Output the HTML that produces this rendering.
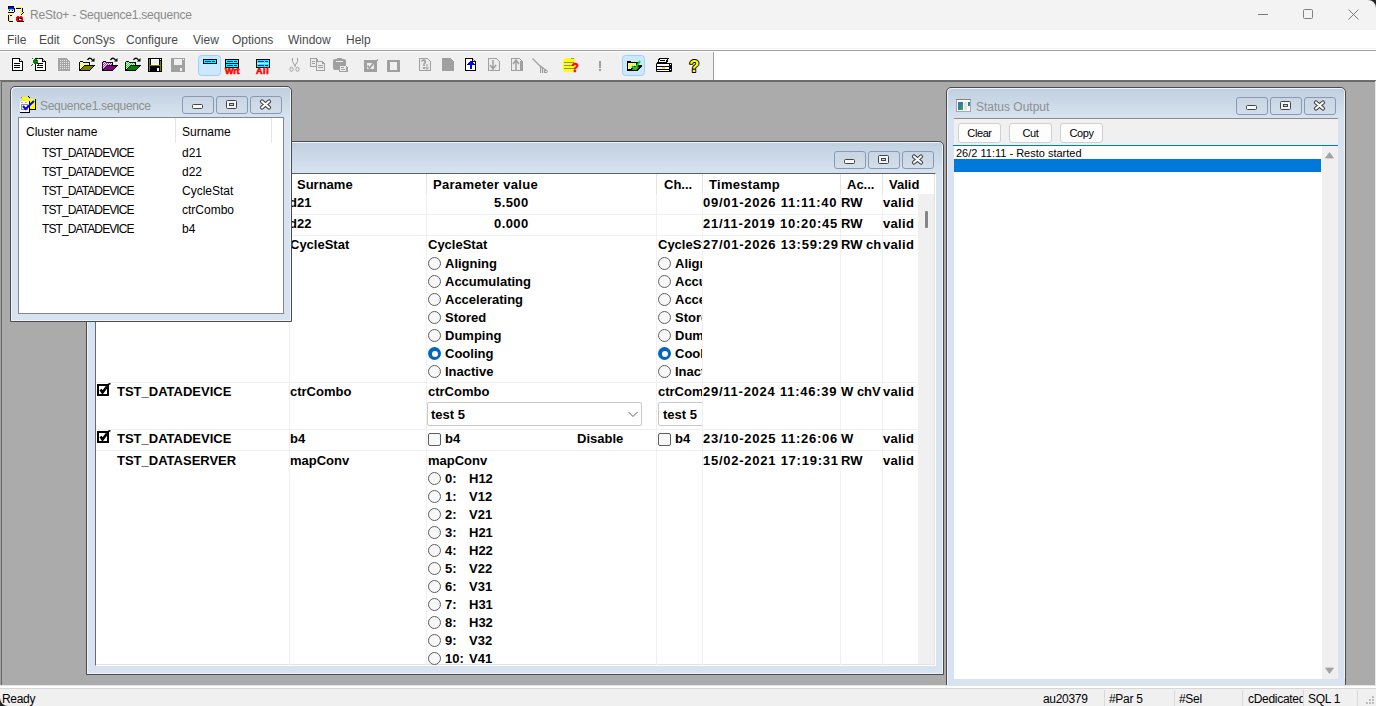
<!DOCTYPE html>
<html><head><meta charset="utf-8"><style>
*{box-sizing:border-box}
html,body{margin:0;padding:0}
body{width:1376px;height:706px;position:relative;overflow:hidden;background:#ababab;font-family:"Liberation Sans",sans-serif;color:#000}
.a{position:absolute}
.t{position:absolute;white-space:nowrap;line-height:1}
.g{font-weight:bold;font-size:13px}
.ts{letter-spacing:0.55px}
.hl{position:absolute;background:#f0f0f0;height:1px}
.vl{position:absolute;background:#f0f0f0;width:1px}
.win{position:absolute;border:1px solid #4b4b4b;border-radius:5px 5px 0 0;background:linear-gradient(#c0cfdf,#d7e3f0 31px,#d7e3f0);box-shadow:inset 1px 1px 0 #eef3f9,inset -1px -1px 0 #eef3f9}
.tb{position:absolute;width:32px;height:18px;border:1px solid #8799b5;border-radius:3px;background:linear-gradient(#c9d5e3,#d3deea)}
.tb svg{position:absolute;left:-1px;top:-1px}
.wt{position:absolute;font-size:12px;color:#8f8f8f;line-height:1;white-space:nowrap}
.sb{position:absolute;top:693px;font-size:12px;line-height:1;white-space:nowrap;letter-spacing:-0.3px}
.sep{position:absolute;top:690px;width:1px;height:16px;background:#d9d9d9}
.rad{position:absolute;width:13px;height:13px;border-radius:50%;border:1px solid #5f5f5f;background:#f7f7f7}
.rad.on{border:none;background:#0067c0}
.rad.on:after{content:"";position:absolute;left:3.5px;top:3.5px;width:6px;height:6px;border-radius:50%;background:#fff}
.chk{position:absolute;width:13px;height:13px;border:1px solid #5f5f5f;border-radius:2px;background:#f7f7f7}
.btn{position:absolute;height:20px;border:1px solid #d0d0d0;border-radius:3px;background:#fdfdfd;font-size:11px;line-height:18px;text-align:center;letter-spacing:-0.4px}
</style></head><body>
<div class="a" style="left:0;top:0;width:1376px;height:30px;background:#f3f3f3"></div>
<div class="a" style="left:0;top:30px;width:1376px;height:20px;background:#fff"></div>
<div class="t" style="left:7px;top:34px;font-size:12px;color:#4a4a4a">File</div>
<div class="t" style="left:39px;top:34px;font-size:12px;color:#4a4a4a">Edit</div>
<div class="t" style="left:73px;top:34px;font-size:12px;color:#4a4a4a">ConSys</div>
<div class="t" style="left:126px;top:34px;font-size:12px;color:#4a4a4a">Configure</div>
<div class="t" style="left:193px;top:34px;font-size:12px;color:#4a4a4a">View</div>
<div class="t" style="left:232px;top:34px;font-size:12px;color:#4a4a4a">Options</div>
<div class="t" style="left:288px;top:34px;font-size:12px;color:#4a4a4a">Window</div>
<div class="t" style="left:346px;top:34px;font-size:12px;color:#4a4a4a">Help</div>
<svg class="a" style="left:8px;top:6px" width="16" height="16" shape-rendering="crispEdges">
<rect x="0" y="0" width="6" height="1" fill="#000"/><rect x="0" y="1" width="1" height="2" fill="#000"/><rect x="1" y="1" width="5" height="2" fill="#0000ff"/>
<rect x="0" y="3" width="7" height="1" fill="#00e0ff"/><rect x="0" y="4" width="6" height="1" fill="#fff"/><rect x="1" y="4" width="1" height="1" fill="#000"/><rect x="4" y="4" width="1" height="1" fill="#000"/>
<rect x="6" y="2" width="1" height="4" fill="#000"/><rect x="0" y="6" width="6" height="1" fill="#000"/>
<rect x="8" y="1" width="6" height="1" fill="#ffff00"/><rect x="8" y="2" width="5" height="1" fill="#000"/><rect x="13" y="1" width="1" height="6" fill="#ffff00"/><rect x="14" y="2" width="1" height="5" fill="#000"/>
<rect x="12" y="6" width="3" height="1" fill="#ffff00"/><rect x="13" y="7" width="1" height="1" fill="#ffff00"/><rect x="15" y="6" width="1" height="1" fill="#000"/><rect x="13" y="8" width="1" height="1" fill="#000"/><rect x="14" y="7" width="1" height="1" fill="#000"/>
<rect x="1" y="7" width="1" height="8" fill="#ffff00"/><rect x="0" y="8" width="3" height="1" fill="#ffff00"/><rect x="0" y="9" width="1" height="6" fill="#000"/><rect x="2" y="9" width="2" height="1" fill="#000"/>
<rect x="1" y="14" width="3" height="1" fill="#ffff00"/><rect x="1" y="15" width="4" height="1" fill="#000"/>
<rect x="8" y="11" width="7" height="4" fill="#ff0000"/><rect x="9" y="10" width="2" height="1" fill="#ff0000"/><rect x="12" y="10" width="2" height="1" fill="#ff0000"/>
<rect x="10" y="12" width="1" height="2" fill="#000"/><rect x="12" y="12" width="2" height="1" fill="#000"/><rect x="9" y="15" width="7" height="1" fill="#000"/><rect x="11" y="13" width="2" height="1" fill="#fff"/>
</svg>
<div class="t" style="left:30px;top:9px;font-size:12px;color:#8a8a8a;letter-spacing:-0.2px">ReSto+ - Sequence1.sequence</div>
<svg class="a" style="left:1250px;top:5px" width="120" height="20">
 <line x1="8" y1="9.5" x2="18" y2="9.5" stroke="#7a7a7a"/>
 <rect x="53.5" y="4.5" width="9" height="9" rx="1" fill="none" stroke="#808080"/>
 <line x1="98.5" y1="4.5" x2="108.5" y2="14.5" stroke="#7a7a7a"/>
 <line x1="108.5" y1="4.5" x2="98.5" y2="14.5" stroke="#7a7a7a"/>
</svg>
<svg class="a" style="left:1366px;top:0" width="10" height="10"><path d="M2 0H10V8A8 8 0 0 0 2 0Z" fill="#262626"/></svg>
<div class="a" style="left:0;top:50px;width:1376px;height:31px;background:#fff;border-top:1px solid #a0a0a0;border-bottom:1px solid #6e6e6e"></div>
<div class="a" style="left:0;top:52px;width:714px;height:28px;background:#f0f0f0;border-right:1px solid #a0a0a0"></div>
<div class="a" style="left:0;top:48px;width:1376px;height:1px;background:#f3f3f3"></div>
<svg class="a" style="left:0;top:0" width="720" height="81" shape-rendering="crispEdges">
<defs>
<pattern id="chkY" width="2" height="2" patternUnits="userSpaceOnUse"><rect width="2" height="2" fill="#ffff00"/><rect width="1" height="1" fill="#fff"/><rect x="1" y="1" width="1" height="1" fill="#fff"/></pattern>
<pattern id="chkM" width="2" height="2" patternUnits="userSpaceOnUse"><rect width="2" height="2" fill="#ff00ff"/><rect width="1" height="1" fill="#fff"/><rect x="1" y="1" width="1" height="1" fill="#fff"/></pattern>
<pattern id="chkG" width="2" height="2" patternUnits="userSpaceOnUse"><rect width="2" height="2" fill="#00ff00"/><rect width="1" height="1" fill="#fff"/><rect x="1" y="1" width="1" height="1" fill="#fff"/></pattern>
<pattern id="dotG" width="2" height="2" patternUnits="userSpaceOnUse"><rect width="2" height="2" fill="#a4a4a4"/><rect width="1" height="1" fill="#e8e8e8"/></pattern>
</defs>
<!-- 1 doc -->
<g><path d="M12 58H20V59H13V70H22V61H23V71H12Z" fill="#000"/><path d="M13 59H19V62H22V70H13Z" fill="#fff"/><rect x="19" y="58" width="1" height="4" fill="#000"/><rect x="19" y="61" width="4" height="1" fill="#000"/><rect x="20" y="59" width="1" height="1" fill="#000" opacity="0.5"/><rect x="21" y="60" width="1" height="1" fill="#000" opacity="0.5"/><rect x="14" y="63" width="6" height="1" fill="#000"/><rect x="14" y="65" width="6" height="1" fill="#000"/><rect x="14" y="67" width="6" height="1" fill="#000"/></g>
<!-- 2 new doc -->
<g><path d="M35 58H43V59H36V70H45V61H46V71H35Z" fill="#000"/><path d="M36 59H42V62H45V70H36Z" fill="#fff"/><rect x="42" y="58" width="1" height="4" fill="#000"/><rect x="42" y="61" width="4" height="1" fill="#000"/><rect x="43" y="59" width="1" height="1" fill="#000" opacity="0.5"/><rect x="44" y="60" width="1" height="1" fill="#000" opacity="0.5"/><rect x="37" y="63" width="6" height="1" fill="#000"/><rect x="37" y="65" width="6" height="1" fill="#000"/><rect x="37" y="67" width="6" height="1" fill="#000"/><rect x="34" y="59" width="3" height="5" fill="#008000"/><rect x="33" y="60" width="5" height="3" fill="#008000"/><rect x="32" y="58" width="1" height="1" fill="#008000"/><rect x="38" y="58" width="1" height="1" fill="#008000"/><rect x="32" y="64" width="1" height="1" fill="#008000"/><rect x="38" y="64" width="1" height="1" fill="#008000"/><rect x="31" y="65" width="1" height="1" fill="#008000"/><rect x="39" y="65" width="1" height="1" fill="#008000"/></g>
<!-- 3 gray doc -->
<path d="M58 58H66L70 62V71H58Z" fill="url(#dotG)"/><path d="M58 58H66V59H59V70H69V62H70V71H58Z" fill="#a4a4a4"/><path d="M66 58L70 62V63H69V62L66 59Z" fill="#a4a4a4"/>
<!-- folders -->
<g><path d="M80 62H89V65H84L80 70Z" fill="url(#chkY)"/><rect x="80" y="61" width="3" height="1" fill="#000"/><rect x="79" y="62" width="1" height="9" fill="#000"/><rect x="83" y="62" width="7" height="1" fill="#000"/><rect x="89" y="62" width="1" height="3" fill="#000"/><path d="M84 65H95L90 71H79V70H80Z" fill="#000"/><path d="M84.5 66H93L89 70H81Z" fill="#808000"/><path d="M87.5 60Q89 57.5 91 58.5L92.5 60" stroke="#000" stroke-width="1.3" fill="none" shape-rendering="auto"/><path d="M91 61.5H94.5V58Z" fill="#000" shape-rendering="auto"/></g>
<g><path d="M103 62H112V65H107L103 70Z" fill="url(#chkM)"/><rect x="103" y="61" width="3" height="1" fill="#000"/><rect x="102" y="62" width="1" height="9" fill="#000"/><rect x="106" y="62" width="7" height="1" fill="#000"/><rect x="112" y="62" width="1" height="3" fill="#000"/><path d="M107 65H118L113 71H102V70H103Z" fill="#000"/><path d="M107.5 66H116L112 70H104Z" fill="#800080"/><path d="M110.5 60Q112 57.5 114 58.5L115.5 60" stroke="#000" stroke-width="1.3" fill="none" shape-rendering="auto"/><path d="M114 61.5H117.5V58Z" fill="#000" shape-rendering="auto"/></g>
<g><path d="M126 62H135V65H130L126 70Z" fill="url(#chkG)"/><rect x="126" y="61" width="3" height="1" fill="#000"/><rect x="125" y="62" width="1" height="9" fill="#000"/><rect x="129" y="62" width="7" height="1" fill="#000"/><rect x="135" y="62" width="1" height="3" fill="#000"/><path d="M130 65H141L136 71H125V70H126Z" fill="#000"/><path d="M130.5 66H139L135 70H127Z" fill="#008000"/><path d="M133.5 60Q135 57.5 137 58.5L138.5 60" stroke="#000" stroke-width="1.3" fill="none" shape-rendering="auto"/><path d="M137 61.5H140.5V58Z" fill="#000" shape-rendering="auto"/></g>
<!-- floppy -->
<rect x="148" y="58" width="14" height="14" fill="#000"/>
<rect x="149" y="59" width="1" height="12" fill="#808000"/><rect x="160" y="61" width="1" height="10" fill="#808000"/><rect x="149" y="65" width="12" height="1" fill="#808000"/>
<rect x="151" y="59" width="8" height="6" fill="#fff"/><rect x="152" y="60" width="6" height="4" fill="#efefef"/>
<rect x="157" y="68" width="2" height="3" fill="#fff"/><rect x="160" y="59" width="1" height="1" fill="#fff"/>
<!-- gray floppy -->
<rect x="171" y="58" width="14" height="14" fill="#a0a0a0"/>
<rect x="174" y="59" width="8" height="6" fill="#efefef"/>
<rect x="180" y="68" width="2" height="3" fill="#efefef"/><rect x="183" y="59" width="1" height="1" fill="#fff"/>
<!-- highlighted button 1 -->
<rect x="198.5" y="55.5" width="22" height="20" rx="3" fill="#cce8ff" stroke="#99d1ff" shape-rendering="auto"/>
<rect x="203" y="59" width="14" height="5" fill="#000"/><rect x="204" y="60" width="12" height="3" fill="#00ffff"/><rect x="205" y="61" width="6" height="1" fill="#0000ff"/><rect x="212" y="61" width="3" height="1" fill="#0000ff"/>
<!-- Wrt -->
<rect x="225" y="59" width="14" height="9" fill="#000"/><rect x="226" y="60" width="12" height="3" fill="#00ffff"/><rect x="226" y="64" width="12" height="3" fill="#00ffff"/>
<rect x="227" y="61" width="6" height="1" fill="#0000ff"/><rect x="234" y="61" width="3" height="1" fill="#0000ff"/><rect x="227" y="65" width="6" height="1" fill="#0000ff"/><rect x="234" y="65" width="3" height="1" fill="#0000ff"/>
<text x="225" y="73.5" font-family="Liberation Sans" font-weight="bold" font-size="9" fill="#ff0000" stroke="#ff0000" stroke-width="0.6" letter-spacing="-0.2">Wrt</text>
<!-- All -->
<rect x="256" y="59" width="14" height="9" fill="#000"/><rect x="257" y="60" width="12" height="3" fill="#00ffff"/><rect x="257" y="64" width="12" height="3" fill="#00ffff"/><rect x="257" y="63" width="12" height="1" fill="#e0e0e0"/>
<rect x="258" y="61" width="6" height="1" fill="#0000ff"/><rect x="265" y="61" width="3" height="1" fill="#0000ff"/><rect x="258" y="65" width="6" height="1" fill="#0000ff"/><rect x="265" y="65" width="3" height="1" fill="#0000ff"/>
<text x="256" y="73.5" font-family="Liberation Sans" font-weight="bold" font-size="9" fill="#ff0000" stroke="#ff0000" stroke-width="0.6" letter-spacing="0.6">All</text>
<!-- scissors -->
<g fill="none" stroke="#a0a0a0" stroke-width="1" shape-rendering="auto">
<path d="M292.5 58V61.5L295.5 66.5M297.5 58V61.5L294.5 66.5"/>
<ellipse cx="291.5" cy="69.3" rx="1.6" ry="2.1"/><ellipse cx="297.5" cy="69.3" rx="1.6" ry="2.1"/>
</g>
<!-- copy -->
<path d="M310 58H316L318 60V67H310Z" fill="#a0a0a0"/><rect x="311" y="59" width="5" height="7" fill="#ececec"/>
<rect x="312" y="61" width="3" height="1" fill="#a0a0a0"/><rect x="312" y="63" width="3" height="1" fill="#a0a0a0"/>
<path d="M316 61H322L325 64V71H316Z" fill="#a0a0a0"/><rect x="317" y="62" width="5" height="8" fill="#ececec"/><rect x="322" y="64" width="2" height="6" fill="#ececec"/>
<rect x="318" y="65" width="5" height="1" fill="#a0a0a0"/><rect x="318" y="67" width="5" height="1" fill="#a0a0a0"/>
<!-- paste -->
<rect x="333" y="59" width="13" height="11" rx="2" fill="#a0a0a0" shape-rendering="auto"/><rect x="337" y="58" width="5" height="2" fill="#a0a0a0"/><rect x="336" y="61" width="7" height="1" fill="#ececec"/>
<path d="M339 65H345L348 68V72H339Z" fill="#a0a0a0"/><rect x="340" y="66" width="6" height="5" fill="#ececec"/>
<rect x="341" y="67" width="3" height="1" fill="#a0a0a0"/><rect x="341" y="69" width="4" height="1" fill="#a0a0a0"/>
<!-- checkbox gray -->
<rect x="364" y="60" width="13" height="12" fill="#a0a0a0"/><rect x="367" y="63" width="7" height="6" fill="#ececec"/>
<path d="M367.5 65.5L369.5 68L374.5 62" stroke="#a0a0a0" stroke-width="1.8" fill="none" shape-rendering="auto"/><rect x="377" y="59" width="1" height="2" fill="#a0a0a0"/>
<!-- square gray -->
<rect x="387" y="60" width="13" height="12" fill="#a0a0a0"/><rect x="390" y="62" width="7" height="8" fill="#f0f0f0"/>
<!-- ?doc -->
<path d="M419 58H427L431 62V71H419Z" fill="#a0a0a0"/><path d="M420 59H427L430 62V70H420Z" fill="#ececec"/>
<path d="M421.5 61.5Q423 59.5 425 60.5Q426 62 424 64V66" stroke="#a0a0a0" stroke-width="1.6" fill="none" shape-rendering="auto"/><rect x="423" y="67" width="2" height="2" fill="#a0a0a0"/>
<path d="M427 64V69M425.5 67.5L427 69.5L428.5 67.5" stroke="#a0a0a0" fill="none" shape-rendering="auto"/>
<!-- gray filled doc -->
<path d="M442 58H450L454 62V71H442Z" fill="#a0a0a0"/>
<!-- blue arrow doc -->
<path d="M465 58H473V59H466V70H475V61H476V71H465Z" fill="#000"/><path d="M466 59H472V62H475V70H466Z" fill="#fff"/><rect x="472" y="58" width="1" height="4" fill="#000"/><rect x="472" y="61" width="4" height="1" fill="#000"/><rect x="473" y="59" width="1" height="1" fill="#000" opacity="0.5"/><rect x="474" y="60" width="1" height="1" fill="#000" opacity="0.5"/><path d="M471 60L467 65H470V69H472V65H475Z" fill="#0000ff"/>
<!-- down arrow doc gray -->
<path d="M488 58H496L500 62V71H488Z" fill="#a0a0a0"/><path d="M489 59H496L499 62V70H489Z" fill="#ececec"/>
<path d="M493 60V68M490 65L493 69L496 65" stroke="#a0a0a0" stroke-width="1.5" fill="none" shape-rendering="auto"/>
<!-- up arrow doc gray -->
<path d="M511 58H519L523 62V71H511Z" fill="#a0a0a0"/><path d="M512 59H519L522 62V70H512Z" fill="#ececec"/>
<path d="M516 70V61M513 64L516 60L519 64" stroke="#a0a0a0" stroke-width="1.5" fill="none" shape-rendering="auto"/><rect x="520" y="61" width="2" height="9" fill="#a0a0a0"/>
<!-- broom -->
<path d="M532.5 58.5L541 67" stroke="#a0a0a0" stroke-width="1.2" fill="none" shape-rendering="auto"/>
<path d="M540 65L548 71L547 73H540Z" fill="#a0a0a0" shape-rendering="auto"/><rect x="541" y="68" width="1" height="5" fill="#e0e0e0"/><rect x="543" y="69" width="1" height="4" fill="#e0e0e0"/><rect x="545" y="71" width="2" height="1" fill="#e0e0e0"/>
<!-- db yellow ? -->
<path d="M565 58H574L575 60V71L573 72H565L563 71V60Z" fill="#ffff00"/>
<rect x="564" y="62" width="10" height="1" fill="#8a8aa0"/><rect x="564" y="65" width="10" height="1" fill="#8a8aa0"/><rect x="564" y="68" width="10" height="1" fill="#8a8aa0"/><rect x="571" y="58" width="3" height="1" fill="#8a8aa0"/>
<text x="571.5" y="72" font-family="Liberation Sans" font-weight="bold" font-size="12" fill="#ff0000" stroke="#ff0000" stroke-width="0.5">?</text>
<!-- ! -->
<rect x="599" y="61" width="2" height="7" fill="#a0a0a0"/><rect x="599" y="69" width="2" height="2" fill="#a0a0a0"/>
<!-- highlighted button 2 -->
<rect x="622.5" y="55.5" width="22" height="20" rx="3" fill="#cce8ff" stroke="#99d1ff" shape-rendering="auto"/>
<path d="M627 61H630L631 62H638V65H642V66L637 71H627Z" fill="#000"/>
<rect x="628" y="63" width="8" height="6" fill="url(#chkY)"/>
<path d="M629 71L633 66H641L637 71Z" fill="#000"/><path d="M631 70L634 67H639L636 70Z" fill="#808000"/>
<path d="M632 66L635 69L640 61" stroke="#00e000" stroke-width="2" fill="none" shape-rendering="auto"/>
<!-- printer -->
<path d="M659 58H669L667 63H657Z" fill="#000"/><path d="M660 59H667L666 62H659Z" fill="#fff"/><rect x="660" y="60" width="5" height="1" fill="#000"/>
<rect x="656" y="63" width="16" height="9" rx="1" fill="#000" shape-rendering="auto"/>
<rect x="657" y="64" width="12" height="2" fill="#fff"/><rect x="657" y="67" width="12" height="2" fill="#fff"/><rect x="662" y="67" width="3" height="2" fill="#e8e800"/>
<rect x="657" y="70" width="12" height="1" fill="#fff"/><rect x="670" y="64" width="1" height="1" fill="#fff"/><rect x="670" y="69" width="1" height="1" fill="#fff"/>
<!-- ? yellow -->
<text x="689.3" y="72.3" font-family="Liberation Sans" font-weight="bold" font-size="16.5" fill="#ffff00" stroke="#000" stroke-width="2" paint-order="stroke" stroke-linejoin="round">?</text>
</svg>

<div class="a" style="left:0;top:81px;width:1376px;height:605px;background:#ababab;border-left:1px solid #a0a0a0;border-right:1px solid #e8e8e8;box-shadow:inset 1px 1px 0 #696969"></div>
<div class="win" style="left:86px;top:141px;width:858px;height:534px"></div>
<div class="tb" style="left:834px;top:151px"><svg width="32" height="18"><rect x="10.5" y="8.5" width="10" height="4" rx="1" fill="#fafafa" stroke="#444"/></svg></div><div class="tb" style="left:868px;top:151px"><svg width="32" height="18"><rect x="10.5" y="4.5" width="10" height="8" rx="1" fill="#f4f4f4" stroke="#444"/><rect x="13.5" y="7.5" width="4" height="2" fill="#c9d5e3" stroke="#444"/></svg></div><div class="tb" style="left:902px;top:151px"><svg width="32" height="18"><path d="M12 5.5L19 11.5M19 5.5L12 11.5" stroke="#3a3a3a" stroke-width="4.2" stroke-linecap="round"/><path d="M12 5.5L19 11.5M19 5.5L12 11.5" stroke="#fafafa" stroke-width="2.2" stroke-linecap="round"/></svg></div>
<div class="a" style="left:95px;top:173px;width:841px;height:493px;background:#fff;border-left:1px solid #6a6a6a;border-top:1px solid #606060;border-right:1px solid #fff;border-bottom:1px solid #fff;box-shadow:inset -1px -1px 0 #e3e3e3"></div>
<div class="a" style="left:918px;top:194px;width:16px;height:470px;background:#f0f0f0"></div>
<div class="a" style="left:925px;top:211px;width:2.5px;height:17px;background:#858585;border-radius:1px"></div>
<div class="vl" style="left:289px;top:174px;height:491px"></div>
<div class="vl" style="left:289px;top:174px;height:20px;background:#e3e3e3"></div>
<div class="vl" style="left:426px;top:174px;height:491px"></div>
<div class="vl" style="left:426px;top:174px;height:20px;background:#e3e3e3"></div>
<div class="vl" style="left:656px;top:174px;height:491px"></div>
<div class="vl" style="left:656px;top:174px;height:20px;background:#e3e3e3"></div>
<div class="vl" style="left:702px;top:174px;height:491px"></div>
<div class="vl" style="left:702px;top:174px;height:20px;background:#e3e3e3"></div>
<div class="vl" style="left:840px;top:174px;height:491px"></div>
<div class="vl" style="left:840px;top:174px;height:20px;background:#e3e3e3"></div>
<div class="vl" style="left:882px;top:174px;height:491px"></div>
<div class="vl" style="left:882px;top:174px;height:20px;background:#e3e3e3"></div>
<div class="hl" style="left:96px;top:214px;width:822px"></div>
<div class="hl" style="left:96px;top:235px;width:822px"></div>
<div class="hl" style="left:96px;top:382px;width:822px"></div>
<div class="hl" style="left:96px;top:429px;width:822px"></div>
<div class="hl" style="left:96px;top:450px;width:822px"></div>
<div class="t g" style="left:297px;top:178px;">Surname</div>
<div class="t g" style="left:433px;top:178px;letter-spacing:0.3px">Parameter value</div>
<div class="t g" style="left:664px;top:178px;">Ch...</div>
<div class="t g" style="left:709px;top:178px;letter-spacing:0.3px">Timestamp</div>
<div class="t g" style="left:847px;top:178px;">Ac...</div>
<div class="t g" style="left:889px;top:178px;">Valid</div>
<div class="t g" style="left:289px;top:196px;">d21</div>
<div class="t g" style="left:494px;top:196px;letter-spacing:0.4px">5.500</div>
<div class="t g" style="left:703px;top:196px;letter-spacing:0.75px">09/01-2026 11:11:40</div>
<div class="t g" style="left:841px;top:196px;">RW</div>
<div class="t g" style="left:883px;top:196px;letter-spacing:0.3px">valid</div>
<div class="t g" style="left:289px;top:217px;">d22</div>
<div class="t g" style="left:494px;top:217px;letter-spacing:0.4px">0.000</div>
<div class="t g" style="left:703px;top:217px;letter-spacing:0.75px">21/11-2019 10:20:45</div>
<div class="t g" style="left:841px;top:217px;">RW</div>
<div class="t g" style="left:883px;top:217px;letter-spacing:0.3px">valid</div>
<div class="t g" style="left:290px;top:238px;">CycleStat</div>
<div class="t g" style="left:428px;top:238px;">CycleStat</div>
<div class="rad" style="left:428px;top:257px"></div>
<div class="t g" style="left:445px;top:257px;">Aligning</div>
<div class="rad" style="left:428px;top:275px"></div>
<div class="t g" style="left:445px;top:275px;">Accumulating</div>
<div class="rad" style="left:428px;top:293px"></div>
<div class="t g" style="left:445px;top:293px;">Accelerating</div>
<div class="rad" style="left:428px;top:311px"></div>
<div class="t g" style="left:445px;top:311px;">Stored</div>
<div class="rad" style="left:428px;top:329px"></div>
<div class="t g" style="left:445px;top:329px;">Dumping</div>
<div class="rad on" style="left:428px;top:347px"></div>
<div class="t g" style="left:445px;top:347px;">Cooling</div>
<div class="rad" style="left:428px;top:365px"></div>
<div class="t g" style="left:445px;top:365px;">Inactive</div>
<div class="a" style="left:657px;top:236px;width:45px;height:146px;overflow:hidden"><div class="t g" style="left:1px;top:2px">CycleStat</div><div class="rad" style="left:1px;top:21px"></div><div class="t g" style="left:18px;top:21px">Aligning</div><div class="rad" style="left:1px;top:39px"></div><div class="t g" style="left:18px;top:39px">Accumulating</div><div class="rad" style="left:1px;top:57px"></div><div class="t g" style="left:18px;top:57px">Accelerating</div><div class="rad" style="left:1px;top:75px"></div><div class="t g" style="left:18px;top:75px">Stored</div><div class="rad" style="left:1px;top:93px"></div><div class="t g" style="left:18px;top:93px">Dumping</div><div class="rad on" style="left:1px;top:111px"></div><div class="t g" style="left:18px;top:111px">Cooling</div><div class="rad" style="left:1px;top:129px"></div><div class="t g" style="left:18px;top:129px">Inactive</div></div>
<div class="t g" style="left:703px;top:238px;letter-spacing:0.75px">27/01-2026 13:59:29</div>
<div class="a" style="left:841px;top:236px;width:41px;height:20px;overflow:hidden"><div class="t g" style="left:0;top:2px">RW ch</div></div>
<div class="t g" style="left:883px;top:238px;letter-spacing:0.3px">valid</div>
<svg class="a" style="left:97px;top:383px" width="15" height="13"><rect x="0" y="1" width="12" height="12" fill="#000"/><rect x="2" y="3" width="8" height="8" fill="#fff"/><path d="M3.5 6.5L5.5 9.5L10 3.5" stroke="#000" stroke-width="2.6" fill="none"/><path d="M11 1.5L13.5 0.5" stroke="#000" stroke-width="1.5"/></svg>
<div class="t g" style="left:117px;top:385px;">TST_DATADEVICE</div>
<div class="t g" style="left:290px;top:385px;">ctrCombo</div>
<div class="t g" style="left:428px;top:385px;">ctrCombo</div>
<div class="a" style="left:427px;top:402px;width:215px;height:24px;border:1px solid #c8c8c8;border-radius:2px;background:#fff"></div>
<div class="t g" style="left:431px;top:408px;">test 5</div>
<svg class="a" style="left:627px;top:410px" width="12" height="8"><path d="M1.5 2L6 6.5L10.5 2" stroke="#606060" fill="none" stroke-width="1"/></svg>
<div class="a" style="left:657px;top:383px;width:45px;height:46px;overflow:hidden"><div class="t g" style="left:1px;top:2px">ctrCombo</div><div class="a" style="left:1px;top:19px;width:80px;height:24px;border:1px solid #c8c8c8;border-radius:2px;background:#fff"></div><div class="t g" style="left:6px;top:25px">test 5</div></div>
<div class="t g" style="left:703px;top:385px;letter-spacing:0.75px">29/11-2024 11:46:39</div>
<div class="a" style="left:841px;top:383px;width:41px;height:20px;overflow:hidden"><div class="t g" style="left:0;top:2px">W chV</div></div>
<div class="t g" style="left:883px;top:385px;letter-spacing:0.3px">valid</div>
<svg class="a" style="left:97px;top:430px" width="15" height="13"><rect x="0" y="1" width="12" height="12" fill="#000"/><rect x="2" y="3" width="8" height="8" fill="#fff"/><path d="M3.5 6.5L5.5 9.5L10 3.5" stroke="#000" stroke-width="2.6" fill="none"/><path d="M11 1.5L13.5 0.5" stroke="#000" stroke-width="1.5"/></svg>
<div class="t g" style="left:117px;top:432px;">TST_DATADEVICE</div>
<div class="t g" style="left:290px;top:432px;">b4</div>
<div class="chk" style="left:428px;top:433px"></div>
<div class="t g" style="left:445px;top:432px;">b4</div>
<div class="t g" style="left:577px;top:432px;">Disable</div>
<div class="chk" style="left:658px;top:433px"></div>
<div class="t g" style="left:675px;top:432px;">b4</div>
<div class="t g" style="left:703px;top:432px;letter-spacing:0.75px">23/10-2025 11:26:06</div>
<div class="t g" style="left:841px;top:432px;">W</div>
<div class="t g" style="left:883px;top:432px;letter-spacing:0.3px">valid</div>
<div class="t g" style="left:117px;top:454px;">TST_DATASERVER</div>
<div class="t g" style="left:290px;top:454px;">mapConv</div>
<div class="t g" style="left:428px;top:454px;">mapConv</div>
<div class="a" style="left:96px;top:174px;width:822px;height:491px;overflow:hidden"><div class="rad" style="left:332px;top:298px"></div><div class="t g" style="left:349px;top:298px">0:</div><div class="t g" style="left:373px;top:298px">H12</div><div class="rad" style="left:332px;top:316px"></div><div class="t g" style="left:349px;top:316px">1:</div><div class="t g" style="left:373px;top:316px">V12</div><div class="rad" style="left:332px;top:334px"></div><div class="t g" style="left:349px;top:334px">2:</div><div class="t g" style="left:373px;top:334px">V21</div><div class="rad" style="left:332px;top:352px"></div><div class="t g" style="left:349px;top:352px">3:</div><div class="t g" style="left:373px;top:352px">H21</div><div class="rad" style="left:332px;top:370px"></div><div class="t g" style="left:349px;top:370px">4:</div><div class="t g" style="left:373px;top:370px">H22</div><div class="rad" style="left:332px;top:388px"></div><div class="t g" style="left:349px;top:388px">5:</div><div class="t g" style="left:373px;top:388px">V22</div><div class="rad" style="left:332px;top:406px"></div><div class="t g" style="left:349px;top:406px">6:</div><div class="t g" style="left:373px;top:406px">V31</div><div class="rad" style="left:332px;top:424px"></div><div class="t g" style="left:349px;top:424px">7:</div><div class="t g" style="left:373px;top:424px">H31</div><div class="rad" style="left:332px;top:442px"></div><div class="t g" style="left:349px;top:442px">8:</div><div class="t g" style="left:373px;top:442px">H32</div><div class="rad" style="left:332px;top:460px"></div><div class="t g" style="left:349px;top:460px">9:</div><div class="t g" style="left:373px;top:460px">V32</div><div class="rad" style="left:332px;top:478px"></div><div class="t g" style="left:349px;top:478px">10:</div><div class="t g" style="left:373px;top:478px">V41</div></div>
<div class="t g" style="left:703px;top:454px;letter-spacing:0.75px">15/02-2021 17:19:31</div>
<div class="t g" style="left:841px;top:454px;">RW</div>
<div class="t g" style="left:883px;top:454px;letter-spacing:0.3px">valid</div>
<div class="win" style="left:10px;top:86px;width:282px;height:236px"></div>
<div class="tb" style="left:182px;top:96px"><svg width="32" height="18"><rect x="10.5" y="8.5" width="10" height="4" rx="1" fill="#fafafa" stroke="#444"/></svg></div><div class="tb" style="left:216px;top:96px"><svg width="32" height="18"><rect x="10.5" y="4.5" width="10" height="8" rx="1" fill="#f4f4f4" stroke="#444"/><rect x="13.5" y="7.5" width="4" height="2" fill="#c9d5e3" stroke="#444"/></svg></div><div class="tb" style="left:250px;top:96px"><svg width="32" height="18"><path d="M12 5.5L19 11.5M19 5.5L12 11.5" stroke="#3a3a3a" stroke-width="4.2" stroke-linecap="round"/><path d="M12 5.5L19 11.5M19 5.5L12 11.5" stroke="#fafafa" stroke-width="2.2" stroke-linecap="round"/></svg></div>
<svg class="a" style="left:20px;top:96px" width="17" height="17" shape-rendering="crispEdges">
<rect x="2" y="1" width="6" height="2" fill="#ffff00"/><rect x="8" y="0" width="1" height="1" fill="#000"/><rect x="9" y="1" width="1" height="1" fill="#000"/><rect x="1" y="1" width="1" height="1" fill="#808080"/>
<rect x="2" y="3" width="13" height="10" fill="#ffff00"/>
<rect x="15" y="3" width="1" height="11" fill="#000"/><rect x="9" y="13" width="7" height="1" fill="#000"/>
<rect x="0" y="5" width="9" height="11" fill="#fff"/>
<rect x="1" y="6" width="2" height="1" fill="#b0b0b0"/><rect x="5" y="6" width="2" height="1" fill="#b0b0b0"/>
<rect x="1" y="8" width="7" height="1" fill="#909090"/><rect x="1" y="8" width="1" height="6" fill="#909090"/><rect x="7" y="8" width="1" height="6" fill="#909090"/><rect x="1" y="13" width="7" height="1" fill="#909090"/>
<rect x="0" y="16" width="10" height="1" fill="#000"/><rect x="9" y="5" width="1" height="12" fill="#000"/>
<path d="M3 10L5.5 13L14 5" stroke="#0000ff" stroke-width="2" fill="none" shape-rendering="auto"/>
</svg>
<div class="wt" style="left:40px;top:100px;letter-spacing:-0.3px">Sequence1.sequence</div>
<div class="a" style="left:18px;top:117px;width:266px;height:197px;background:#fff;border:1px solid #828790"></div>
<div class="vl" style="left:175px;top:118px;height:25px;background:#e5e5e5"></div>
<div class="vl" style="left:271px;top:118px;height:25px;background:#e5e5e5"></div>
<div class="t" style="left:26px;top:126px;font-size:12px">Cluster name</div>
<div class="t" style="left:182px;top:126px;font-size:12px">Surname</div>
<div class="t" style="left:42px;top:147px;font-size:12px;letter-spacing:-0.9px">TST_DATADEVICE</div>
<div class="t" style="left:182px;top:147px;font-size:12px">d21</div>
<div class="t" style="left:42px;top:166px;font-size:12px;letter-spacing:-0.9px">TST_DATADEVICE</div>
<div class="t" style="left:182px;top:166px;font-size:12px">d22</div>
<div class="t" style="left:42px;top:185px;font-size:12px;letter-spacing:-0.9px">TST_DATADEVICE</div>
<div class="t" style="left:182px;top:185px;font-size:12px">CycleStat</div>
<div class="t" style="left:42px;top:204px;font-size:12px;letter-spacing:-0.9px">TST_DATADEVICE</div>
<div class="t" style="left:182px;top:204px;font-size:12px">ctrCombo</div>
<div class="t" style="left:42px;top:223px;font-size:12px;letter-spacing:-0.9px">TST_DATADEVICE</div>
<div class="t" style="left:182px;top:223px;font-size:12px">b4</div>
<div class="win" style="left:946px;top:87px;width:400px;height:620px"></div>
<div class="tb" style="left:1236px;top:97px"><svg width="32" height="18"><rect x="10.5" y="8.5" width="10" height="4" rx="1" fill="#fafafa" stroke="#444"/></svg></div><div class="tb" style="left:1270px;top:97px"><svg width="32" height="18"><rect x="10.5" y="4.5" width="10" height="8" rx="1" fill="#f4f4f4" stroke="#444"/><rect x="13.5" y="7.5" width="4" height="2" fill="#c9d5e3" stroke="#444"/></svg></div><div class="tb" style="left:1304px;top:97px"><svg width="32" height="18"><path d="M12 5.5L19 11.5M19 5.5L12 11.5" stroke="#3a3a3a" stroke-width="4.2" stroke-linecap="round"/><path d="M12 5.5L19 11.5M19 5.5L12 11.5" stroke="#fafafa" stroke-width="2.2" stroke-linecap="round"/></svg></div>
<svg class="a" style="left:956px;top:99px" width="16" height="14" shape-rendering="crispEdges">
<defs><linearGradient id="sgr" x1="0" y1="0" x2="1" y2="1"><stop offset="0" stop-color="#3d6fc0"/><stop offset="0.5" stop-color="#2f8090"/><stop offset="1" stop-color="#45b050"/></linearGradient></defs>
<rect x="0" y="0" width="15" height="13" fill="#a8a8a8"/><rect x="0" y="0" width="15" height="1" fill="#858585"/>
<rect x="1" y="1" width="13" height="11" fill="#fafafa"/>
<rect x="2" y="3" width="5" height="8" fill="url(#sgr)"/>
<rect x="8" y="3" width="3" height="8" fill="#e2e2e2"/>
<rect x="12" y="3" width="2" height="4" fill="url(#sgr)"/>
</svg>
<div class="wt" style="left:976px;top:101px">Status Output</div>
<div class="a" style="left:954px;top:118px;width:384px;height:570px;background:#fff;border-top:1px solid #8c8c8c"></div>
<div class="a" style="left:954px;top:119px;width:384px;height:26px;background:#f0f0f0"></div>
<div class="btn" style="left:958px;top:123px;width:43px">Clear</div>
<div class="btn" style="left:1009px;top:123px;width:43px">Cut</div>
<div class="btn" style="left:1060px;top:123px;width:43px">Copy</div>
<div class="a" style="left:953px;top:145px;width:385px;height:1px;background:#0078d7"></div>
<div class="t" style="left:956px;top:148px;font-size:11px">26/2 11:11 - Resto started</div>
<div class="a" style="left:954px;top:159px;width:367px;height:13px;background:#0078d7"></div>
<div class="a" style="left:1322px;top:146px;width:16px;height:533px;background:#f0f0f0"></div>
<svg class="a" style="left:1324px;top:150px" width="13" height="10"><path d="M1.5 8L5.5 2.5L9.5 8Z" stroke="#a3a3a3" stroke-width="0.8" stroke-linejoin="round" fill="#a3a3a3"/></svg>
<svg class="a" style="left:1324px;top:666px" width="13" height="10"><path d="M1.5 2L5.5 7.5L9.5 2Z" stroke="#a3a3a3" stroke-width="0.8" stroke-linejoin="round" fill="#a3a3a3"/></svg>
<div class="a" style="left:953px;top:679px;width:392px;height:6px;background:#d7e3f0"></div>
<div class="a" style="left:0;top:685px;width:1376px;height:21px;background:linear-gradient(#e3e3e3 0 1px,#fff 1px 3px,#d6d6d6 3px 4px,#f0f0f0 4px)"></div>
<div class="sb" style="left:2px">Ready</div>
<svg class="a" style="left:0;top:696px" width="10" height="10"><path d="M0 2A8 8 0 0 0 8 10H0Z" fill="#262626"/></svg>
<div class="sep" style="left:1104px"></div>
<div class="sep" style="left:1174px"></div>
<div class="sep" style="left:1242px"></div>
<div class="sep" style="left:1303px"></div>
<div class="sep" style="left:1357px"></div>
<div class="sb" style="left:1043px">au20379</div>
<div class="sb" style="left:1109px">#Par 5</div>
<div class="sb" style="left:1179px">#Sel</div>
<div class="sb" style="left:1248px;width:55px;overflow:hidden">cDedicated</div>
<div class="sb" style="left:1308px">SQL 1</div>
<svg class="a" style="left:1364px;top:694px" width="12" height="12" shape-rendering="crispEdges">
<rect x="8" y="2" width="2" height="2" fill="#bdbdbd"/><rect x="5" y="5" width="2" height="2" fill="#bdbdbd"/><rect x="8" y="5" width="2" height="2" fill="#bdbdbd"/>
<rect x="2" y="8" width="2" height="2" fill="#bdbdbd"/><rect x="5" y="8" width="2" height="2" fill="#bdbdbd"/><rect x="8" y="8" width="2" height="2" fill="#bdbdbd"/>
</svg>
</body></html>
